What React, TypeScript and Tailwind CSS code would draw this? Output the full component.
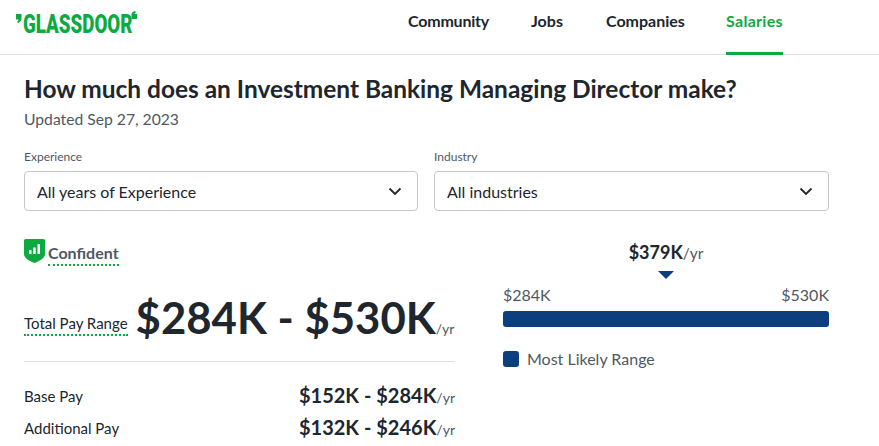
const lato = 'font-["Lato","Liberation_Sans",sans-serif]';

function Chevron() {
  return (
    <svg width="14" height="9" viewBox="0 0 14 9" fill="none" stroke="#20262e" strokeWidth="1.8">
      <path d="M1.5 1.5 7 7l5.5-5.5" />
    </svg>
  );
}

function Select({ label, value, className }: { label: string; value: string; className: string }) {
  return (
    <div className={className}>
      <div className="text-[12px] leading-[16px] text-[#505863] mb-[6px]">{label}</div>
      <div className="h-[40px] flex items-center justify-between pl-[12px] pr-[15px] border border-[#c4c7cc] rounded-[4px] bg-white">
        <span className="text-[16px] leading-[20px] pt-[1px] text-[#20262e]">{value}</span>
        <Chevron />
      </div>
    </div>
  );
}

function PayRow({ label, value, className }: { label: string; value: string; className?: string }) {
  return (
    <div className={`flex items-center justify-between ${className ?? ''}`}>
      <span className="text-[15px] text-[#20262e]">{label}</span>
      <span className="text-[20px] leading-[24px] font-bold text-[#20262e]">
        {value}
        <span className="text-[14px] font-normal text-[#505863]">/yr</span>
      </span>
    </div>
  );
}

function Logo() {
  return (
    <div className="flex items-start">
      <svg width="6" height="9" viewBox="0 0 6 9" className="mt-[5px]">
        <path d="M0 0h5.500v4.500C5.500 6.500 4 8 2 9L1 7.800c1-.6 1.500-1.300 1.600-2.300H0z" fill="#0caa41" />
      </svg>
      <div className="w-[108px] ml-[1px]">
        <span className="text-[#0caa41] font-['Roboto',sans-serif] font-black text-[26px] leading-[30px] inline-block origin-left scale-x-[0.72] whitespace-nowrap">
          GLASSDOOR
        </span>
      </div>
      <svg width="6" height="8" viewBox="0 0 6 8" className="mt-[2px]">
        <path d="M6 8H.5V3.500C.5 1.800 2 .6 4 0l1 1.200C4 1.800 3.500 2.300 3.400 3H6z" fill="#0caa41" />
      </svg>
    </div>
  );
}

export default function App() {
  return (
    <div className={`w-[879px] h-[446px] overflow-hidden bg-white ${lato}`}>
      {/* Header */}
      <div className="h-[55px] border-b border-[#dee0e3] flex pl-[16px]">
        <div className="w-[392px] pt-[9px]">
          <Logo />
        </div>
        <nav className="flex text-[16px] font-bold text-[#20262e]">
          <a className="pt-[9px] w-[123px] tracking-[-0.2px]">Community</a>
          <a className="pt-[9px] w-[75px]">Jobs</a>
          <a className="pt-[9px] w-[120px]">Companies</a>
          <a className="pt-[9px] h-[55px] w-[57px] border-b-[3px] border-[#0caa41] text-[#0caa41] whitespace-nowrap tracking-[0.3px]">Salaries</a>
        </nav>
      </div>

      <div className="pl-[24px] pr-[50px]">
        <h1 className="text-[24.45px] leading-[32px] font-bold text-[#20262e] mt-[18px] whitespace-nowrap">
          How much does an Investment Banking Managing Director make?
        </h1>
        <p className="text-[15.7px] leading-[20px] text-[#505863] mt-[4px]">Updated Sep 27, 2023</p>

        <div className="flex gap-[16px] mt-[20px]">
          <Select label="Experience" value="All years of Experience" className="w-[394px]" />
          <Select label="Industry" value="All industries" className="w-[395px]" />
        </div>

        <div className="flex mt-[28px]">
          {/* Pay figures */}
          <div className="w-[431px]">
            <div className="flex items-start h-[30px]">
              <svg width="21" height="24" viewBox="0 0 21 24">
                <path d="M1.5 0h18A1.5 1.5 0 0 1 21 1.5V15c0 4-5 7-10.500 9C5 22 0 19 0 15V1.500A1.500 1.500 0 0 1 1.500 0z" fill="#0caa41" />
                <path d="M5 11h2.500v4H5zM9.200 8.500h2.500V15H9.200zM13.500 5H16v10h-2.500z" fill="#fff" />
              </svg>
              <span className="ml-[3px] mt-[4px] text-[16px] leading-[20px] font-bold text-[#505863] border-b-2 border-dotted border-[#0caa41] pb-[1px]">
                Confident
              </span>
            </div>
            <div className="flex items-end mt-[20px]">
              <span className="text-[15px] leading-[18px] text-[#20262e] border-b-2 border-dotted border-[#0caa41] pb-[2px] mb-[9px] mr-[8px] whitespace-nowrap">
                Total Pay Range
              </span>
              <span className="text-[43.7px] leading-[56px] font-bold text-[#20262e] whitespace-nowrap">
                $284K - $530K
              </span>
              <span className="text-[14px] leading-[18px] text-[#505863] mb-[7px]">/yr</span>
            </div>
            <div className="border-t border-[#dee0e3] mt-[16px]" />
            <PayRow label="Base Pay" value="$152K - $284K" className="mt-[21px]" />
            <PayRow label="Additional Pay" value="$132K - $246K" className="mt-[5px]" />
          </div>

          {/* Range chart */}
          <div className="ml-[48px] w-[326px] mt-[1px]">
            <div className="flex flex-col items-center">
              <span className="text-[18px] leading-[24px] font-bold text-[#20262e]">
                $379K<span className="text-[15.5px] font-normal text-[#505863]">/yr</span>
              </span>
              <svg width="16" height="8" viewBox="0 0 16 8" className="mt-[6px]">
                <path d="M0 0h16L8 8z" fill="#0d3f7f" />
              </svg>
            </div>
            <div className="flex justify-between text-[16px] leading-[20px] text-[#505863] mt-[6px]">
              <span>$284K</span>
              <span>$530K</span>
            </div>
            <div className="h-[16px] rounded-[3px] bg-[#0d3f7f] mt-[6px]" />
            <div className="flex items-center mt-[22px]">
              <span className="w-[16px] h-[16px] rounded-[3px] bg-[#0d3f7f]" />
              <span className="ml-[8px] text-[16px] leading-[20px] text-[#505863]">Most Likely Range</span>
            </div>
          </div>
        </div>
      </div>
    </div>
  );
}
